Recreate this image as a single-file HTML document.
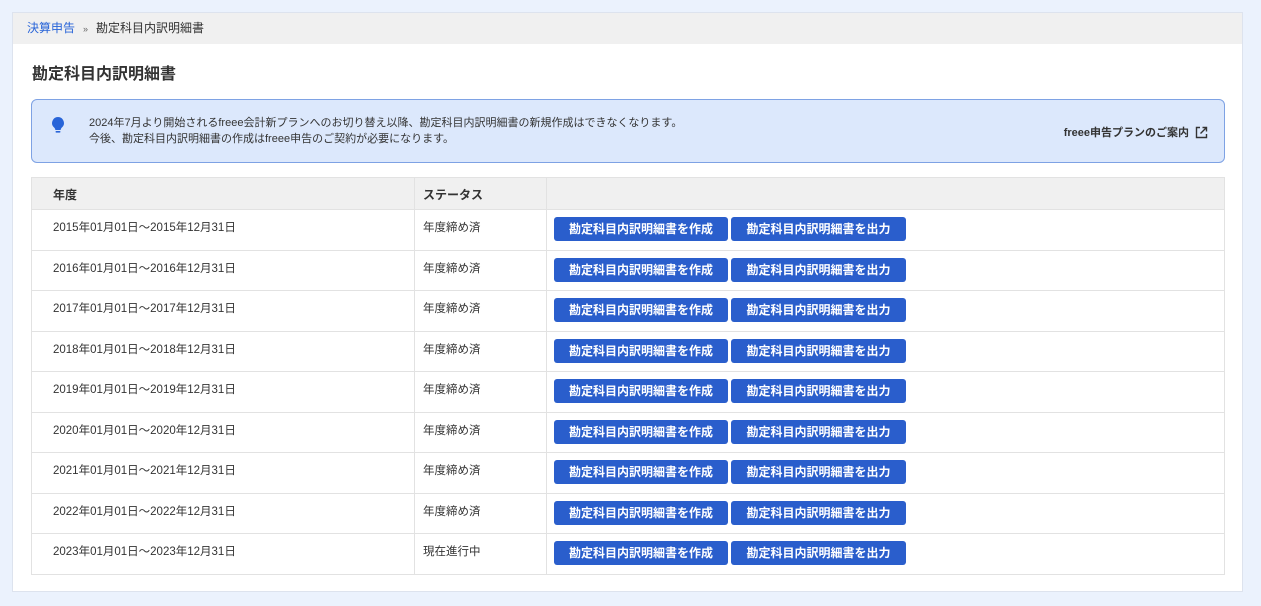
<!DOCTYPE html>
<html><head><meta charset="utf-8"><style>
*{box-sizing:border-box;margin:0;padding:0}
body{width:1261px;height:606px;background:#ebf2fd;font-family:"Liberation Sans","Noto Sans CJK JP",sans-serif;color:#333;font-size:12px;position:relative;overflow:hidden}
.card{position:absolute;left:12px;top:12px;width:1231px;height:580px;background:#fff;border:1px solid #dde3ee}
.bc{height:31px;background:#f0f0f0;padding-left:14px;line-height:30px;font-size:12px;color:#333}
.bc a{color:#2864d8;text-decoration:none}
.bc .s{margin:0 8px;font-size:9px;color:#666}
h1{position:absolute;left:19px;top:47px;font-size:16px;font-weight:bold;color:#333}
.note{position:absolute;left:18px;top:86px;width:1194px;height:64px;background:#dce8fc;border:1px solid #7ea2e4;border-radius:6px}
.note .t{position:absolute;left:57px;top:15px;line-height:16px;font-size:11px;color:#333}
.note .r{position:absolute;right:16px;top:24px;font-size:11px;font-weight:bold;color:#333;display:flex;align-items:center;gap:6px}
.bulb{position:absolute;left:19px;top:16px}
table{position:absolute;left:18px;top:164px;width:1194px;border-collapse:collapse}
th,td{border:1px solid #e2e2e2;text-align:left;vertical-align:top}
th{height:32px;background:#f0f0f0;font-weight:bold;font-size:12px;padding:8px 0 0 21px}
td{height:40.5px;padding:9px 0 0 21px;font-size:11.5px}
td.b{padding:7px 0 0 7px}
th.c2,td.c2{padding-left:8px}
.btn{display:inline-block;height:24px;line-height:24px;background:#2a5ecc;color:#fff;font-weight:bold;font-size:12px;border-radius:3px;text-align:center;margin-right:1px}
.b1{width:174px}.b2{width:175px;margin-left:2px}
</style></head><body>
<div class="card">
<div class="bc"><a>決算申告</a><span class="s">»</span>勘定科目内訳明細書</div>
<h1>勘定科目内訳明細書</h1>
<div class="note">
<svg class="bulb" width="14" height="20" viewBox="0 0 14 20"><path d="M7 1a6 6 0 0 0-4 10.4c.8.8 1.3 1.6 1.3 2.6h5.4c0-1 .5-1.8 1.3-2.6A6 6 0 0 0 7 1z" fill="#2864d8"/><rect x="4.5" y="15" width="5" height="1.6" rx=".8" fill="#2864d8"/></svg>
<div class="t">2024年7月より開始されるfreee会計新プランへのお切り替え以降、勘定科目内訳明細書の新規作成はできなくなります。<br>今後、勘定科目内訳明細書の作成はfreee申告のご契約が必要になります。</div>
<div class="r">freee申告プランのご案内 <svg width="13" height="13" viewBox="0 0 13 13" fill="none" stroke="#333" stroke-width="1.4"><path d="M5 1.5H1.5v10h10V8M7.5 1.5h4v4M11.5 1.5 5.5 7.5"/></svg></div>
</div>
<table>
<tr><th style="width:383px">年度</th><th class="c2" style="width:132px">ステータス</th><th></th></tr>
<tr><td>2015年01月01日〜2015年12月31日</td><td class="c2">年度締め済</td><td class="b"><span class="btn b1">勘定科目内訳明細書を作成</span><span class="btn b2">勘定科目内訳明細書を出力</span></td></tr>
<tr><td>2016年01月01日〜2016年12月31日</td><td class="c2">年度締め済</td><td class="b"><span class="btn b1">勘定科目内訳明細書を作成</span><span class="btn b2">勘定科目内訳明細書を出力</span></td></tr>
<tr><td>2017年01月01日〜2017年12月31日</td><td class="c2">年度締め済</td><td class="b"><span class="btn b1">勘定科目内訳明細書を作成</span><span class="btn b2">勘定科目内訳明細書を出力</span></td></tr>
<tr><td>2018年01月01日〜2018年12月31日</td><td class="c2">年度締め済</td><td class="b"><span class="btn b1">勘定科目内訳明細書を作成</span><span class="btn b2">勘定科目内訳明細書を出力</span></td></tr>
<tr><td>2019年01月01日〜2019年12月31日</td><td class="c2">年度締め済</td><td class="b"><span class="btn b1">勘定科目内訳明細書を作成</span><span class="btn b2">勘定科目内訳明細書を出力</span></td></tr>
<tr><td>2020年01月01日〜2020年12月31日</td><td class="c2">年度締め済</td><td class="b"><span class="btn b1">勘定科目内訳明細書を作成</span><span class="btn b2">勘定科目内訳明細書を出力</span></td></tr>
<tr><td>2021年01月01日〜2021年12月31日</td><td class="c2">年度締め済</td><td class="b"><span class="btn b1">勘定科目内訳明細書を作成</span><span class="btn b2">勘定科目内訳明細書を出力</span></td></tr>
<tr><td>2022年01月01日〜2022年12月31日</td><td class="c2">年度締め済</td><td class="b"><span class="btn b1">勘定科目内訳明細書を作成</span><span class="btn b2">勘定科目内訳明細書を出力</span></td></tr>
<tr><td>2023年01月01日〜2023年12月31日</td><td class="c2">現在進行中</td><td class="b"><span class="btn b1">勘定科目内訳明細書を作成</span><span class="btn b2">勘定科目内訳明細書を出力</span></td></tr>
</table>
</div>
</body></html>
